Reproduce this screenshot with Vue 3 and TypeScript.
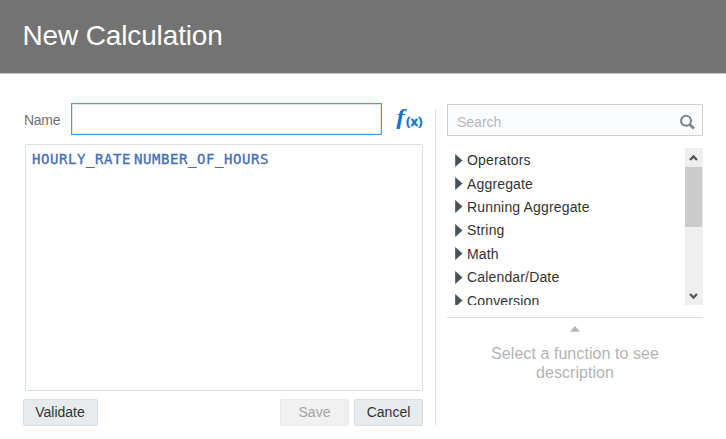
<script setup lang="ts">
import { ref } from 'vue'

const name = ref('')
const query = ref('')
const tokens: string[] = ['HOURLY_RATE', 'NUMBER_OF_HOURS']
const groups: string[] = [
  'Operators',
  'Aggregate',
  'Running Aggregate',
  'String',
  'Math',
  'Calendar/Date',
  'Conversion',
]
</script>

<template>
  <div class="dialog">
    <header class="header"><h1>New Calculation</h1></header>
    <main class="body">
      <section class="left">
        <div class="name-row">
          <label for="calc-name">Name</label>
          <input id="calc-name" v-model="name" class="name-input" type="text" />
          <span class="fx"><i>f</i><b>(x)</b></span>
        </div>
        <div class="editor">
          <span v-for="t in tokens" :key="t" class="token">{{ t }}</span>
        </div>
        <div class="actions">
          <button class="btn validate">Validate</button>
          <button class="btn save" disabled>Save</button>
          <button class="btn">Cancel</button>
        </div>
      </section>
      <section class="right">
        <div class="search">
          <input v-model="query" type="text" placeholder="Search" />
          <svg width="16" height="16" viewBox="0 0 16 16">
            <circle cx="7" cy="6.8" r="5" fill="none" stroke="#7f868b" stroke-width="2.1" />
            <path d="M10.6 10.5L14.9 14.6" stroke="#7f868b" stroke-width="2.8" />
          </svg>
        </div>
        <div class="functions">
          <ul>
            <li v-for="g in groups" :key="g">
              <svg width="8" height="13" viewBox="0 0 8 13"><path d="M0.2 0L7.5 6.5L0.2 13Z" fill="#47525a" /></svg>
              <span>{{ g }}</span>
            </li>
          </ul>
          <div class="scrollbar">
            <svg class="up" width="17" height="19" viewBox="0 0 17 19"><path d="M5 12L8.5 8.5L12 12" fill="none" stroke="#555" stroke-width="2.3" /></svg>
            <div class="thumb"></div>
            <svg class="down" width="17" height="19" viewBox="0 0 17 19"><path d="M5 8L8.5 11.5L12 8" fill="none" stroke="#555" stroke-width="2.3" /></svg>
          </div>
        </div>
        <div class="description">
          <svg width="10" height="6" viewBox="0 0 10 6"><path d="M0 5.8L5 0L10 5.8Z" fill="#b4b4b4" /></svg>
          <p>Select a function to see description</p>
        </div>
      </section>
    </main>
  </div>
</template>

<style>
body {
  margin: 0;
  background: #fff;
}
</style>

<style scoped>
* {
  box-sizing: border-box;
}
.dialog {
  width: 726px;
  height: 439px;
  overflow: hidden;
  background: #fff;
  font-family: "Liberation Sans", Arial, sans-serif;
  color: #333;
}
.header {
  height: 74px;
  padding: 19px 0 0 22.5px;
  background: #737373;
  border-bottom: 1px solid #c6c6c6;
}
h1 {
  margin: 0;
  font-size: 28px;
  line-height: 34px;
  font-weight: 400;
  letter-spacing: -0.14px;
  color: #fff;
}
.body {
  display: flex;
  padding: 29px 23px 0 23px;
}
.left {
  width: 400px;
}
.name-row {
  display: flex;
  align-items: center;
  height: 32px;
}
label {
  flex: none;
  width: 48px;
  padding: 2px 0 0 1px;
  font-size: 14px;
  letter-spacing: -0.3px;
  color: #717171;
}
.name-input {
  flex: none;
  width: 311px;
  height: 32px;
  padding: 0 8px;
  border: 1px solid #4a9fda;
  border-radius: 0;
  box-shadow: inset 0 0 0 1px #dce5eb;
  outline: none;
  font-size: 14px;
}
.fx {
  display: flex;
  align-items: baseline;
  flex: none;
  margin-left: 14px;
  color: #1672cb;
}
.fx i {
  width: 10px;
  font: italic 700 22px/30px "Liberation Serif", serif;
  transform: translate(1px, -2px) scaleX(1.15);
}
.fx b {
  font: 700 13px/20px "Open Sans", sans-serif;
  -webkit-text-stroke: 0.3px #1672cb;
}
.editor {
  display: flex;
  gap: 3px;
  width: 398px;
  height: 247px;
  margin: 9px 0 0 2px;
  padding: 4px 0 0 6px;
  border: 1px solid #d6dfe6;
  border-radius: 2px;
}
.token {
  font: 400 14px/20px "DejaVu Sans Mono", monospace;
  letter-spacing: 0.57px;
  -webkit-text-stroke: 0.35px #4570b4;
  color: #4570b4;
}
.actions {
  display: flex;
  gap: 5px;
  margin-top: 8px;
}
.btn {
  width: 69px;
  height: 27px;
  padding: 0;
  border: 1px solid #d6dfe6;
  border-radius: 2px;
  background: #e7ebee;
  font: 14px/25px "Liberation Sans", Arial, sans-serif;
  color: #333;
}
.validate {
  width: 75px;
  margin-right: auto;
  padding-right: 1px;
}
.save {
  border-color: #e8ebed;
  background: #f1f1f1;
  color: #a4a4a4;
}
.right {
  position: relative;
  width: 256px;
  margin-left: 24px;
  padding-top: 1px;
}
.right::before {
  content: "";
  position: absolute;
  left: -12px;
  top: 6px;
  width: 1px;
  height: 316px;
  background: #d6dfe6;
}
.search {
  display: flex;
  align-items: center;
  height: 32px;
  padding: 0 7px 0 9px;
  border: 1px solid #cfcfcf;
  background: #fbfcfe;
}
.search input {
  flex: 1;
  min-width: 0;
  height: 28px;
  padding: 4px 0 0;
  border: 0;
  outline: none;
  background: transparent;
  font: 14px "Liberation Sans", Arial, sans-serif;
}
.search input::placeholder {
  color: #b8b8b8;
}
.search svg {
  margin-top: 3px;
}
.functions {
  display: flex;
  height: 157px;
  margin-top: 12px;
  overflow: hidden;
}
ul {
  flex: 1;
  margin: 0;
  padding: 0.4px 0 0 8px;
  list-style: none;
}
li {
  display: flex;
  align-items: center;
  gap: 4px;
  height: 23.45px;
  font-size: 14px;
  letter-spacing: 0.16px;
}
.scrollbar {
  display: flex;
  flex-direction: column;
  width: 18px;
  height: 157px;
  background: #efefef;
}
.thumb {
  width: 17px;
  height: 60px;
  background: #cbcbcb;
}
.down {
  margin-top: auto;
}
.description {
  margin-top: 12px;
  padding-top: 8px;
  border-top: 1px solid #d6dfe6;
  text-align: center;
  color: #b4b4b4;
}
.description svg {
  display: block;
  margin: 0 auto;
}
.description p {
  width: 190px;
  margin: 12px auto 0;
  font-size: 16px;
  line-height: 19px;
  letter-spacing: 0.06px;
}
</style>
